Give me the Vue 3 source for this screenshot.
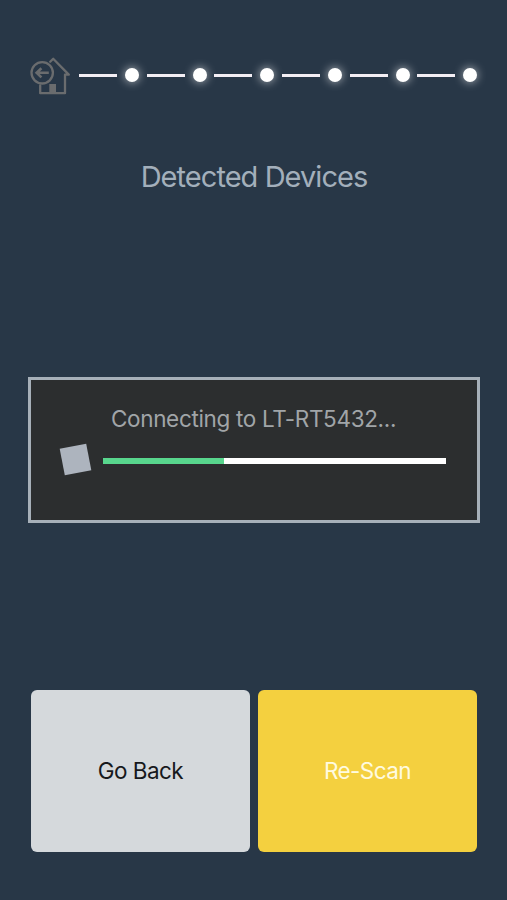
<template>
  <main class="screen">
    <nav class="steps">
      <svg class="home-icon" viewBox="0 0 42 42" width="42" height="42" fill="none" stroke="#6a6c6e" stroke-width="2.3">
        <circle cx="13.2" cy="16.8" r="10.7" />
        <path d="M21.2 5.8 L24.2 2.8 L39.8 18.6 H36 V37.2 H11.2 V29.5" stroke-linejoin="round" stroke-linecap="round" />
        <path d="M20.3 28 H27 V37 H20.3 Z" fill="#6a6c6e" stroke="none" />
        <path d="M19.8 16.8 H8 M12.4 12.2 L7.6 16.8 L12.4 21.4" stroke-width="2.6" />
      </svg>
      <div v-for="step in 6" :key="step" class="step">
        <span class="line"></span>
        <span class="dot"></span>
      </div>
    </nav>

    <h1 class="title">Detected Devices</h1>

    <section class="panel">
      <p class="status">Connecting to {{ device }}...</p>
      <div class="progress-row">
        <span class="spinner"></span>
        <div class="track">
          <div class="bar" :style="{ width: progress + '%' }"></div>
        </div>
      </div>
    </section>

    <div class="actions">
      <button class="btn back">Go Back</button>
      <button class="btn scan">Re-Scan</button>
    </div>
  </main>
</template>

<script setup>
import { ref } from 'vue';

const device = ref('LT-RT5432');
const progress = ref(35.4);
</script>

<style>
body {
  margin: 0;
  background-color: #283747;
}
</style>

<style scoped>
.screen {
  box-sizing: border-box;
  width: 507px;
  height: 900px;
  padding: 54px 27px 48px 28px;
  display: flex;
  flex-direction: column;
  background-color: #283747;
  font-family: Inter, "Liberation Sans", sans-serif;
}

.steps {
  display: flex;
  align-items: center;
  height: 42px;
}

.home-icon {
  flex: none;
  margin: 3px 8px 0 1px;
}

.step {
  flex: none;
  display: flex;
  align-items: center;
  width: 67.7px;
}

.line {
  width: 38px;
  height: 3px;
  background-color: #f3eef4;
}

.dot {
  width: 14px;
  height: 14px;
  margin-left: 8px;
  border-radius: 50%;
  background-color: #fff;
  box-shadow: 0 0 8px 1px rgba(255, 255, 255, 0.5);
}

.title {
  margin: 63px 0 0;
  height: 36px;
  line-height: 36px;
  text-align: center;
  font-size: 29px;
  font-weight: 400;
  letter-spacing: -0.95px;
  color: #a3afbb;
}

.panel {
  box-sizing: border-box;
  height: 146px;
  margin-top: 182px;
  border: 3px solid #a7b0b9;
  padding: 24px 31px 0 30px;
  background-color: #2c2e2f;
}

.status {
  margin: 0;
  height: 30px;
  line-height: 29px;
  text-align: center;
  font-size: 22.5px;
  letter-spacing: -0.33px;
  color: #a1a5a8;
}

.progress-row {
  display: flex;
  align-items: center;
  height: 28px;
  margin-top: 13px;
}

.spinner {
  flex: none;
  width: 27px;
  height: 27px;
  margin: -3px 14px 0 1px;
  background-color: #adb4be;
  transform: rotate(-11deg);
}

.track {
  flex: 1;
  height: 6px;
  background-color: #fff;
}

.bar {
  height: 100%;
  background-color: #58d68d;
}

.actions {
  display: flex;
  gap: 8px;
  margin: auto 3px 0;
}

.btn {
  flex: 1;
  height: 162px;
  padding: 0 0 2px;
  border: none;
  border-radius: 6px;
  font-family: inherit;
  font-size: 22.5px;
  letter-spacing: -0.55px;
}

.back {
  background-color: #d5d9dc;
  color: #17191c;
}

.scan {
  background-color: #f4d03f;
  color: #fffbe0;
}
</style>
